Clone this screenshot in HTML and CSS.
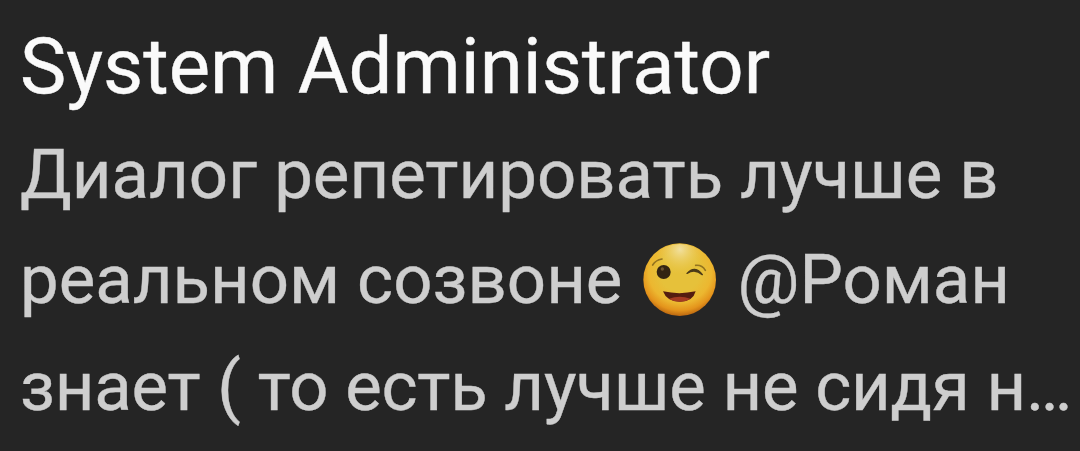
FILE: index.html
```html
<!DOCTYPE html>
<html lang="ru">
<head>
    <meta charset="UTF-8">
    <meta name="viewport" content="width=device-width, initial-scale=1.0">
    <title>System Administrator</title>
    <!-- Styles -->
    <link rel="stylesheet" href="styles.css">
</head>
<body>
    <div class="message">
        <h1 class="sender">System Administrator</h1>
        <p class="text">
            <span class="line line-first">Диалог репетировать лучше в</span>
            <span class="line">реальном созвоне
                <svg class="emoji" viewBox="0 0 300 300" role="img" aria-label="wink">
                    <defs>
                        <radialGradient id="face" cx="150" cy="124" r="135" gradientUnits="userSpaceOnUse">
                            <stop offset="0.45" stop-color="#e6c13a"/>
                            <stop offset="0.7" stop-color="#ecb730"/>
                            <stop offset="0.87" stop-color="#e4941c"/>
                            <stop offset="1" stop-color="#b9640f"/>
                        </radialGradient>
                        <radialGradient id="shine" cx="150" cy="58" r="75" gradientUnits="userSpaceOnUse">
                            <stop offset="0" stop-color="#f3e4ac" stop-opacity="0.9"/>
                            <stop offset="1" stop-color="#ecca50" stop-opacity="0"/>
                        </radialGradient>
                    </defs>
                    <circle cx="149" cy="149" r="109" fill="url(#face)"/>
                    <circle cx="149" cy="149" r="107" fill="url(#shine)"/>
                    <!-- Open eye -->
                    <path d="M68 105Q77 90 96 87" fill="none" stroke="#93731f" stroke-width="5" stroke-linecap="round"/>
                    <circle cx="101" cy="126" r="21" fill="#332412"/>
                    <circle cx="97" cy="117" r="5" fill="#6b5230"/>
                    <!-- Winking eye -->
                    <path d="M197 106Q216 104 226 121" fill="none" stroke="#93731f" stroke-width="5" stroke-linecap="round"/>
                    <path d="M171 130Q195 104 217 134Q195 114 171 130z" fill="#4b3a18" stroke="#4b3a18" stroke-width="4" stroke-linejoin="round"/>
                    <!-- Mouth -->
                    <path d="M99 184Q148 195 197 184Q189 215 150 215Q110 215 99 184z" fill="#541d10"/>
                    <path d="M117 206Q149 194 181 206Q168 215 150 215Q130 215 117 206z" fill="#a33a22"/>
                </svg>
                @Роман</span>
            <span class="line line-last">знает ( то есть лучше не сидя н…</span>
        </p>
    </div>
</body>
</html>
```
FILE: styles.css
```css
body {
    margin: 0;
    background-color: #252525;
    font-family: Roboto, sans-serif;
    overflow: hidden;
}

.message {
    padding: 13px 0 0 20px;
}

.sender {
    margin: 0;
    font-size: 77.9px;
    line-height: 108px;
    font-weight: 400;
    color: #fafafa;
    white-space: nowrap;
    -webkit-text-stroke: 0.4px #fafafa;
}

.text {
    margin: 0;
    font-size: 68.9px;
    color: #cecece;
    -webkit-text-stroke: 0.4px #cecece;
}

.line {
    display: block;
    height: 106px;
    line-height: 106px;
    white-space: nowrap;
}

.line-first {
    line-height: 108px;
}

.line-last {
    line-height: 108px;
    letter-spacing: -0.2px;
}

.emoji {
    width: 100px;
    height: 100px;
    margin: -20px -10px -20px -9px;
    vertical-align: -7px;
}
```
